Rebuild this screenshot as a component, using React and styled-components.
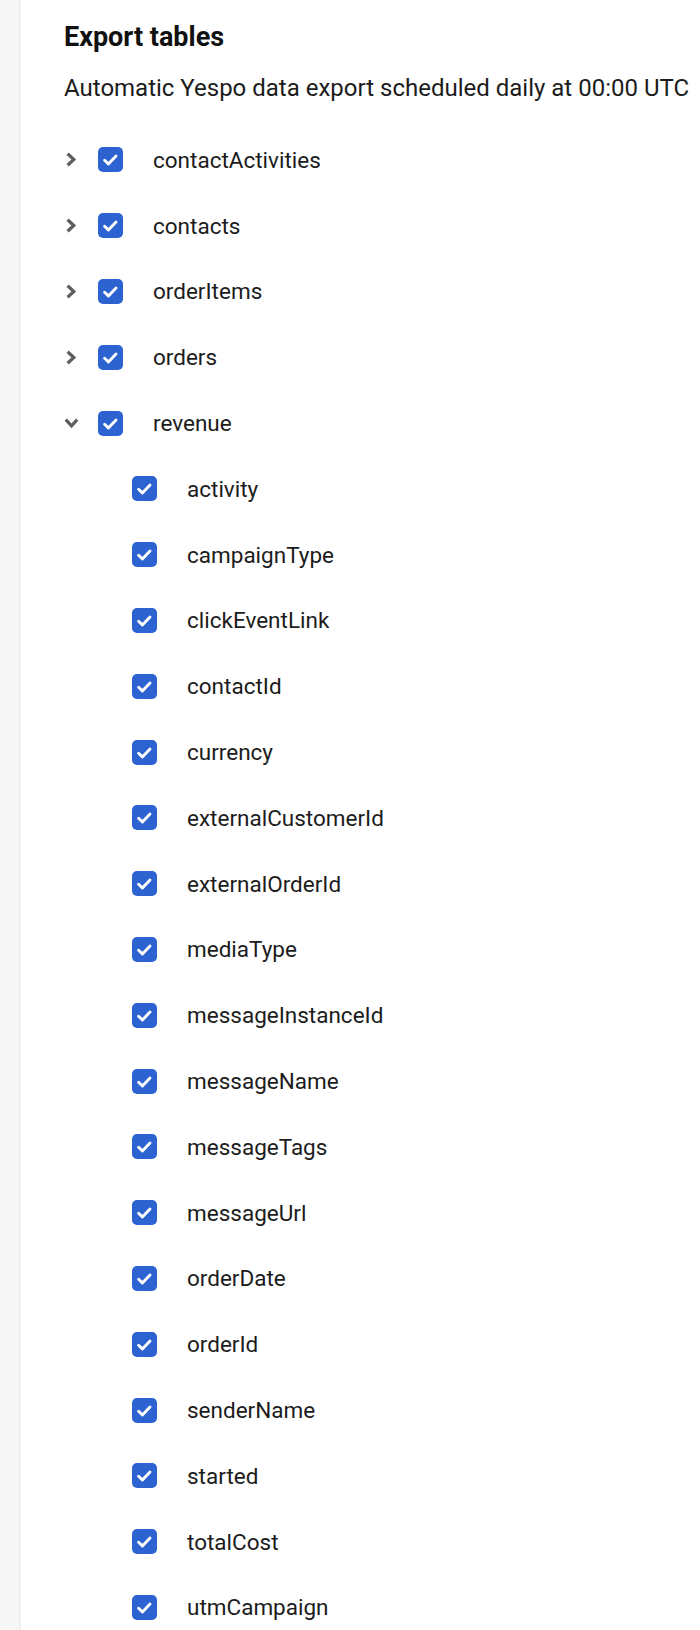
import React, { useState } from 'react';
import styled, { createGlobalStyle } from 'styled-components';

const GlobalStyle = createGlobalStyle`
  html, body {
    margin: 0;
    padding: 0;
    background: #ffffff;
    font-family: Roboto, "Noto Sans", Arial, sans-serif;
  }
`;

const Page = styled.div`
  display: flex;
  min-height: 1630px;
  background: #ffffff;
`;

// серая полоса слева (край боковой панели)
const SideEdge = styled.div`
  width: 19px;
  flex-shrink: 0;
  background: #f7f7f7;
  box-shadow: 1px 0 2px rgba(0, 0, 0, 0.12);
`;

const Content = styled.div`
  flex: 1;
  padding: 21px 0 0 45px;
  color: #1c1c1c;
`;

const Title = styled.h2`
  margin: 0;
  font-size: 27px;
  line-height: 32px;
  font-weight: 700;
  color: #111;
`;

const Subtitle = styled.p`
  margin: 20px 0 0;
  font-size: 24px;
  line-height: 30px;
  white-space: nowrap;
`;

const Tree = styled.div`
  margin-top: 24px;
  display: flex;
  flex-direction: column;
`;

const Row = styled.div`
  display: flex;
  align-items: center;
  height: 65.8px;
  padding-left: ${(p) => (p.$level ? 68 : 0)}px;
`;

const Toggle = styled.button`
  width: 34px;
  height: 24px;
  padding: 0 0 0 1px;
  border: 0;
  background: none;
  display: flex;
  align-items: center;
  cursor: pointer;
  svg {
    transform: rotate(${(p) => (p.$open ? 90 : 0)}deg);
  }
`;

const Box = styled.span`
  width: 25px;
  height: 25px;
  border-radius: 5px;
  background: ${(p) => (p.$checked ? '#2c63d1' : '#fff')};
  border: ${(p) => (p.$checked ? 'none' : '2px solid #777')};
  box-sizing: border-box;
  display: flex;
  align-items: center;
  justify-content: center;
  flex-shrink: 0;
`;

const Label = styled.span`
  margin-left: 30px;
  font-size: 22.5px;
  color: #1c1c1c;
`;

const Chevron = () => (
  <svg width="13" height="15" viewBox="0 0 13 15">
    <path d="M2.6 1.8 L8.8 7.5 L2.6 13.2" fill="none" stroke="#5e5e5e" strokeWidth="3.2" strokeLinejoin="miter" />
  </svg>
);

const Check = () => (
  <svg width="25" height="25" viewBox="0 0 25 25">
    <path d="M6.6 13.2 L10.4 16.9 L18 9.1" fill="none" stroke="#fff" strokeWidth="2.9" strokeLinecap="round" strokeLinejoin="round" />
  </svg>
);

const tables = [
  { name: 'contactActivities' },
  { name: 'contacts' },
  { name: 'orderItems' },
  { name: 'orders' },
  {
    name: 'revenue',
    open: true,
    fields: [
      'activity', 'campaignType', 'clickEventLink', 'contactId', 'currency',
      'externalCustomerId', 'externalOrderId', 'mediaType', 'messageInstanceId',
      'messageName', 'messageTags', 'messageUrl', 'orderDate', 'orderId',
      'senderName', 'started', 'totalCost', 'utmCampaign',
    ],
  },
];

const TableNode = ({ table }) => {
  const [open, setOpen] = useState(!!table.open);
  return (
    <>
      <Row>
        <Toggle $open={open} onClick={() => setOpen(!open)}>
          <Chevron />
        </Toggle>
        <Box $checked>
          <Check />
        </Box>
        <Label>{table.name}</Label>
      </Row>
      {open &&
        (table.fields || []).map((f) => (
          <Row key={f} $level={1}>
            <Box $checked>
              <Check />
            </Box>
            <Label>{f}</Label>
          </Row>
        ))}
    </>
  );
};

const App = () => (
  <Page>
    <GlobalStyle />
    <SideEdge />
    <Content>
      <Title>Export tables</Title>
      <Subtitle>Automatic Yespo data export scheduled daily at 00:00 UTC</Subtitle>
      <Tree>
        {tables.map((t) => (
          <TableNode key={t.name} table={t} />
        ))}
      </Tree>
    </Content>
  </Page>
);

export default App;
